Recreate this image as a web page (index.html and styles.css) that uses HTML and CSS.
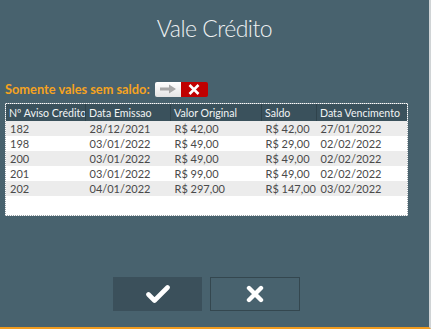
FILE: index.html
```html
<!DOCTYPE html>
<html lang="pt-BR">
<head>
    <meta charset="UTF-8">
    <title>Vale Crédito</title>
    <link rel="stylesheet" href="styles.css">
</head>
<body>
    <div class="window">
        <h1 class="title">Vale Crédito</h1>
        <div class="filter">
            <span class="filter-label">Somente vales sem saldo:</span>
            <div class="toggle">
                <span class="toggle-off">
                    <svg width="18" height="10" viewBox="0 0 18 10"><path d="M1 3.5h9V0.5l7 4.5-7 4.5V6.5H1z" fill="#a8a8a8"/></svg>
                </span>
                <span class="toggle-on">
                    <svg width="12" height="11" viewBox="0 0 12 11"><path d="M1.5 1l9 9M10.5 1l-9 9" stroke="#fff" stroke-width="2.6"/></svg>
                </span>
            </div>
        </div>
        <div class="grid">
            <table>
                <thead>
                    <tr>
                        <th class="c1">Nº Aviso Crédito</th>
                        <th class="c2">Data Emissao</th>
                        <th class="c3">Valor Original</th>
                        <th class="c4">Saldo</th>
                        <th class="c5">Data Vencimento</th>
                    </tr>
                </thead>
                <tbody>
                    <tr><td>182</td><td>28/12/2021</td><td>R$ 42,00</td><td>R$ 42,00</td><td>27/01/2022</td></tr>
                    <tr><td>198</td><td>03/01/2022</td><td>R$ 49,00</td><td>R$ 29,00</td><td>02/02/2022</td></tr>
                    <tr><td>200</td><td>03/01/2022</td><td>R$ 49,00</td><td>R$ 49,00</td><td>02/02/2022</td></tr>
                    <tr><td>201</td><td>03/01/2022</td><td>R$ 99,00</td><td>R$ 49,00</td><td>02/02/2022</td></tr>
                    <tr><td>202</td><td>04/01/2022</td><td>R$ 297,00</td><td>R$ 147,00</td><td>03/02/2022</td></tr>
                </tbody>
            </table>
        </div>
        <div class="actions">
            <button class="btn btn-ok">
                <svg width="24" height="18" viewBox="0 0 24 18"><path d="M2.5 9.5l6 6L21.5 2.5" fill="none" stroke="#fff" stroke-width="4.6" stroke-linecap="round" stroke-linejoin="round"/></svg>
            </button>
            <button class="btn btn-cancel">
                <svg width="18" height="18" viewBox="0 0 18 18"><path d="M3 3l12 12M15 3L3 15" stroke="#fff" stroke-width="4.4" stroke-linecap="round"/></svg>
            </button>
        </div>
    </div>
</body>
</html>
```
FILE: styles.css
```css
body {
    margin: 0;
    padding: 0;
    background-color: #48626e;
    font-family: Lato, "Open Sans", sans-serif;
}
.window {
    width: 429px;
    height: 327px;
    background-color: #48626e;
    border-right: 2px solid #d0d4d6;
    border-bottom: 2px solid #f29c1f;
    display: flex;
    flex-direction: column;
}
.title {
    margin: 12px 0 0;
    text-align: center;
    font-size: 23px;
    font-weight: 300;
    letter-spacing: -0.5px;
    color: #eef1f2;
    line-height: 32px;
}
.filter {
    display: flex;
    align-items: center;
    margin: 37px 0 0 5px;
    height: 16px;
}
.filter-label {
    color: #f5a31f;
    font-weight: bold;
    font-size: 12.8px;
    margin-right: 5px;
    white-space: nowrap;
}
.toggle {
    display: flex;
    height: 15px;
    border-radius: 2px;
    overflow: hidden;
}
.toggle-off {
    width: 26px;
    background: linear-gradient(#ffffff, #e4e4e4);
    display: flex;
    align-items: center;
    justify-content: center;
}
.toggle-on {
    width: 27px;
    background-color: #c00000;
    display: flex;
    align-items: center;
    justify-content: center;
}
.grid {
    margin: 6px 0 0 5px;
    width: 403px;
    height: 113px;
    background-color: #ffffff;
    border: 1px dotted #9aa3a8;
    box-sizing: border-box;
}
table {
    width: 100%;
    table-layout: fixed;
    border-collapse: collapse;
    font-size: 11px;
    color: #333;
}
th {
    background-color: #3a515c;
    color: #f2f4f5;
    font-weight: normal;
    text-align: left;
    height: 17px;
    padding: 0 0 0 3px;
    border-right: 1px solid #2f434c;
    font-size: 10.6px;
    white-space: nowrap;
    overflow: hidden;
}
th.c5 {
    border-right: none;
}
.c1 { width: 76px; }
.c2 { width: 81px; }
.c3 { width: 87px; }
.c4 { width: 51px; }
td {
    height: 15px;
    padding: 0 0 0 4px;
    color: #4a4a4a;
    white-space: nowrap;
}
tbody tr:nth-child(odd) {
    background-color: #ececec;
}
.actions {
    display: flex;
    gap: 8px;
    margin: 61px 0 0 113px;
}
.btn {
    width: 89px;
    height: 34px;
    border: 1px solid #3f5661;
    display: flex;
    align-items: center;
    justify-content: center;
    padding: 0;
    cursor: pointer;
}
.btn-ok {
    background-color: #3b505b;
    border-color: #3b505b;
}
.btn-cancel {
    width: 90px;
    background-color: #48626e;
    border-color: #34474f;
}
```
